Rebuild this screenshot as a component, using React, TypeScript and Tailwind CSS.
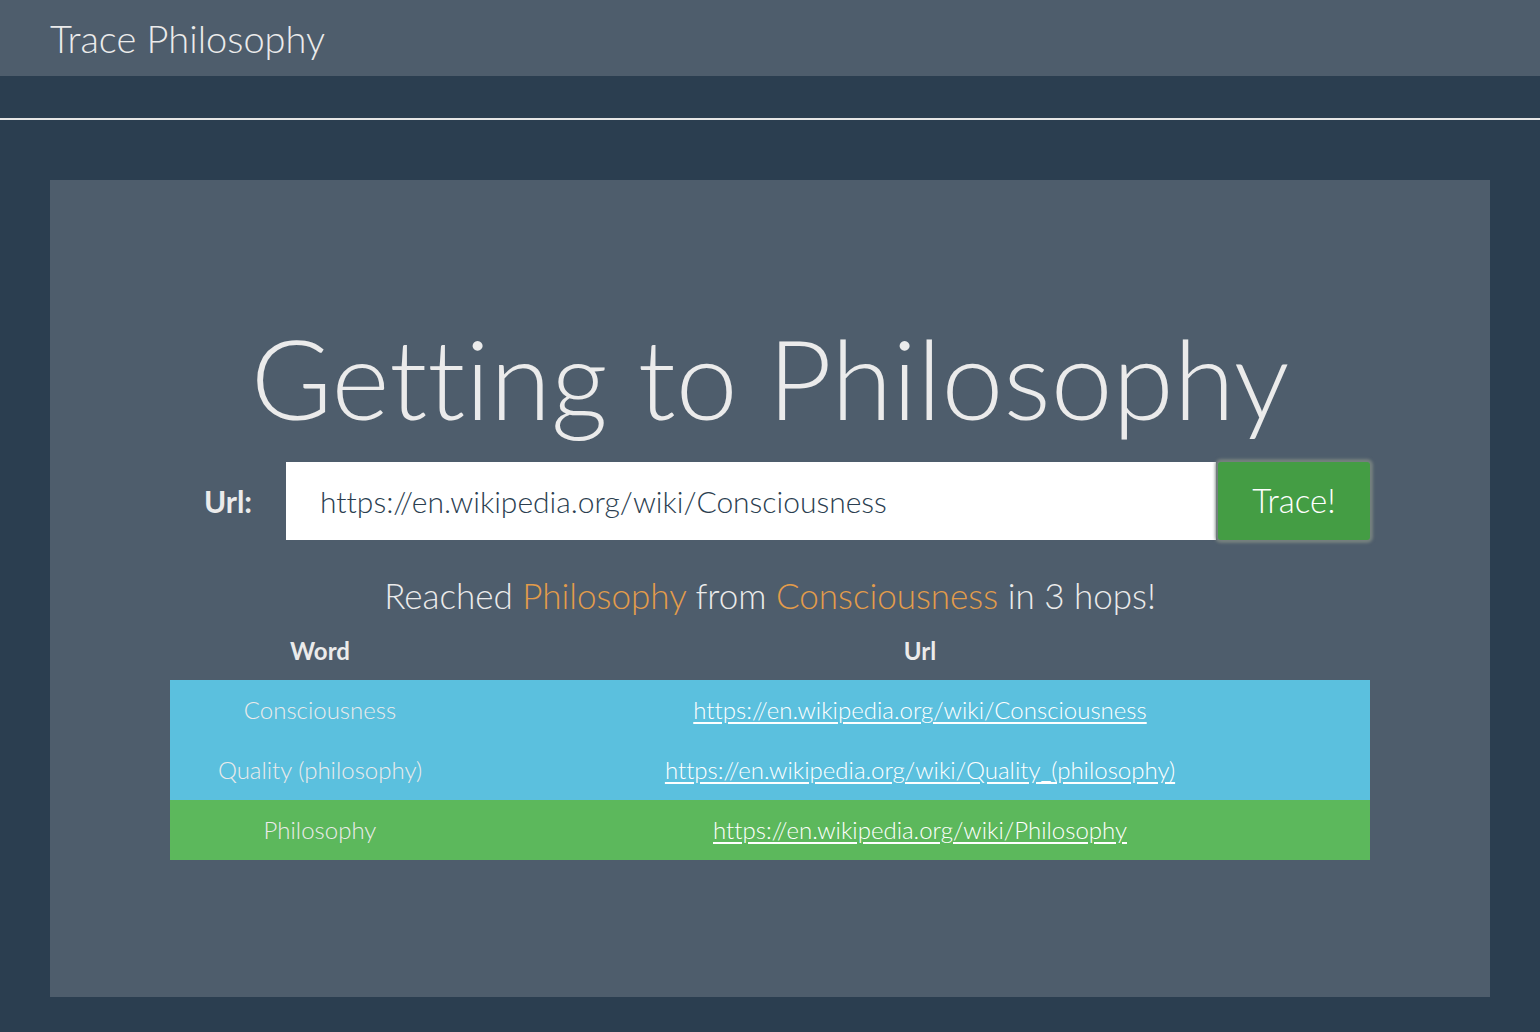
import React from "react";

const rows = [
  { word: "Consciousness", url: "https://en.wikipedia.org/wiki/Consciousness", bg: "bg-[#5bc0de]" },
  { word: "Quality (philosophy)", url: "https://en.wikipedia.org/wiki/Quality_(philosophy)", bg: "bg-[#5bc0de]" },
  { word: "Philosophy", url: "https://en.wikipedia.org/wiki/Philosophy", bg: "bg-[#5cb85c]" },
];

export default function App() {
  return (
    <div className="min-h-[1032px] bg-[#2b3e50] text-[#ebebeb] font-['Lato',sans-serif] font-light [font-variant-ligatures:none]">
      <div className="h-[76px] bg-[#4e5d6c] flex items-center px-[50px]">
        <span className="text-[38px] font-light leading-none text-[#ebebeb]">Trace Philosophy</span>
      </div>
      <div className="h-[42px]" />
      <div className="h-[2px] bg-[#e6e6e6]" />
      <div className="px-[50px] pt-[60px] pb-[35px]">
        <div className="bg-[#4e5d6c] h-[817px] flex flex-col items-center pt-[142px]">
          <h1 className="text-[111px] font-light leading-none text-[#ebebeb]">Getting to Philosophy</h1>
          <div className="flex items-center mt-[29px]">
            <label className="text-[30px] font-bold w-[116px] text-center">Url:</label>
            <div className="w-[930px] h-[78px] bg-white flex items-center pl-[34px] text-[30px] text-[#2b3e50] font-light">
              https://en.wikipedia.org/wiki/Consciousness
            </div>
            <button className="ml-[2px] w-[152px] h-[78px] bg-[#449d44] text-[33px] font-light text-white rounded-[3px] shadow-[0_0_3px_3px_rgba(125,135,130,0.85)]">
              Trace!
            </button>
          </div>
          <div className="mt-[38px] text-[35px] leading-none font-light">
            Reached <span className="text-[#e39c4a]">Philosophy</span> from{" "}
            <span className="text-[#e39c4a]">Consciousness</span> in 3 hops!
          </div>
          <div className="mt-[17px] w-[1200px] text-[24px] font-light">
            <div className="flex h-[50px] items-center pb-[8px] font-bold">
              <div className="w-[300px] text-center">Word</div>
              <div className="w-[900px] text-center">Url</div>
            </div>
            {rows.map((r) => (
              <div key={r.word} className={`flex h-[60px] items-center ${r.bg}`}>
                <div className="w-[300px] text-center">{r.word}</div>
                <div className="w-[900px] text-center">
                  <a href="#" className="underline text-white underline-offset-[3px]">{r.url}</a>
                </div>
              </div>
            ))}
          </div>
        </div>
      </div>
    </div>
  );
}
